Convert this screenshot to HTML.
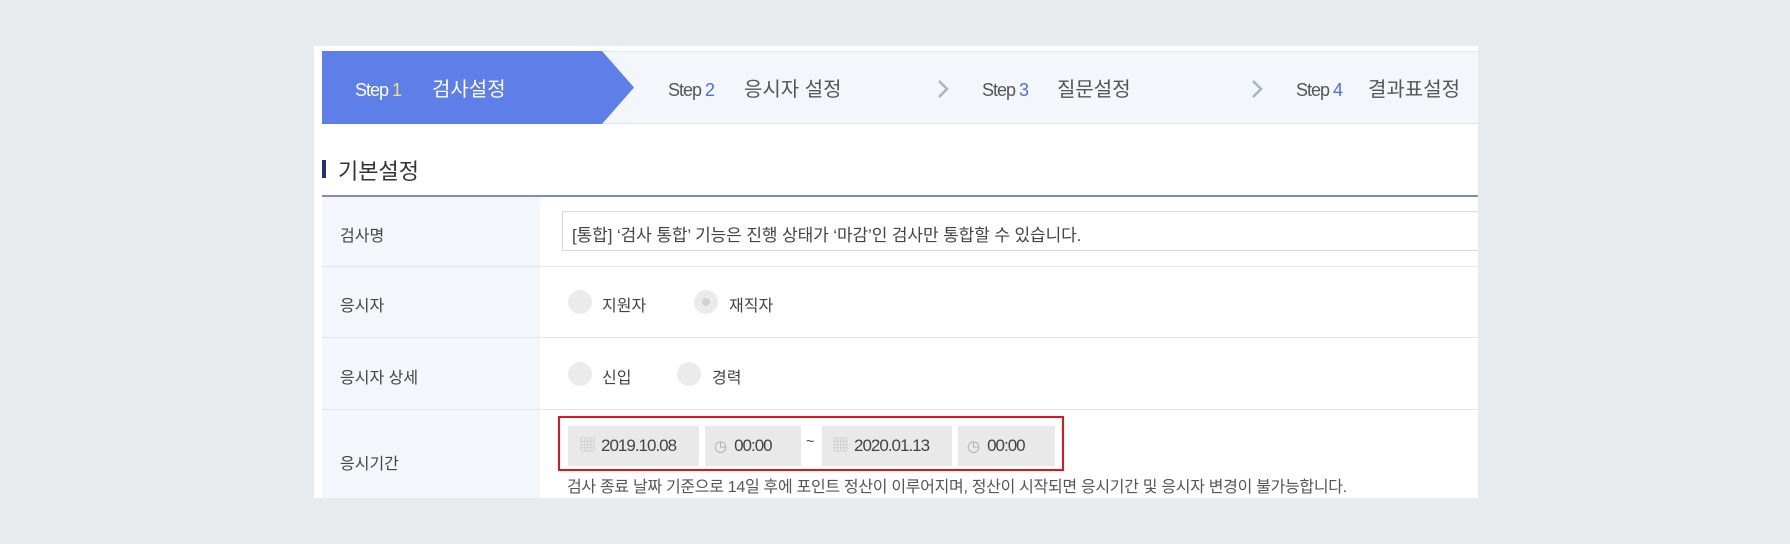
<!DOCTYPE html>
<html><head><meta charset="utf-8"><style>
*{margin:0;padding:0;box-sizing:border-box}
body{width:1790px;height:544px;background:#e8ebee;position:relative;font-family:"Liberation Sans","Noto Sans CJK KR",sans-serif;overflow:hidden}
.a{position:absolute}
.panel{left:314px;top:46px;width:1164px;height:452px;background:#fff;overflow:hidden}
.t{position:absolute;white-space:nowrap;color:#444}
.rad{position:absolute;width:24px;height:24px;border-radius:50%;background:#ebebeb}
.box{position:absolute;top:426px;height:40px;background:#e9e9e9;color:#444;font-size:17px;line-height:40px;letter-spacing:-1px;white-space:nowrap}
.st{position:absolute;top:77px;font-size:18px;line-height:26px;letter-spacing:-1px;white-space:nowrap}
.sk{position:absolute;top:77px;font-size:20px;line-height:26px;white-space:nowrap}
.chev{position:absolute;top:79px}
</style></head><body>
<div class="a panel"></div>
<div class="a" style="left:322px;top:51px;width:1156px;height:73px;background:#f3f6fb;border-top:1px solid #e5e8ee;border-bottom:1px solid #e0e4ea"></div>
<svg class="a" style="left:322px;top:51px" width="320" height="73"><polygon points="0,0 280,0 312,36.5 280,73 0,73" fill="#5e7ee8"/></svg>
<div class="st" style="left:355px;color:#fff">Step <span style="color:#f3e36a">1</span></div>
<div class="sk" style="left:432px;color:#fff">검사설정</div>
<div class="st" style="left:668px;color:#555">Step <span style="color:#4d6fd6">2</span></div>
<div class="sk" style="left:744px;color:#555">응시자 설정</div>
<svg class="chev" style="left:937px" width="12" height="20"><polyline points="2,2 10,10 2,18" fill="none" stroke="#aab4c4" stroke-width="2.5"/></svg>
<div class="st" style="left:982px;color:#555">Step <span style="color:#4d6fd6">3</span></div>
<div class="sk" style="left:1057px;color:#555">질문설정</div>
<svg class="chev" style="left:1251px" width="12" height="20"><polyline points="2,2 10,10 2,18" fill="none" stroke="#aab4c4" stroke-width="2.5"/></svg>
<div class="st" style="left:1296px;color:#555">Step <span style="color:#4d6fd6">4</span></div>
<div class="sk" style="left:1368px;color:#555">결과표설정</div>
<div class="a" style="left:322px;top:160px;width:4px;height:18px;background:#1f3370"></div>
<div class="t" style="left:338px;top:154px;font-size:22px;color:#333">기본설정</div>
<div class="a" style="left:322px;top:195px;width:1156px;height:2px;background:#7d8db5"></div>
<div class="a" style="left:322px;top:197px;width:218px;height:301px;background:#f3f6fb"></div>
<div class="a" style="left:322px;top:266px;width:1156px;height:1px;background:#e2e5ea"></div>
<div class="a" style="left:322px;top:337px;width:1156px;height:1px;background:#e2e5ea"></div>
<div class="a" style="left:322px;top:409px;width:1156px;height:1px;background:#e2e5ea"></div>
<div class="t" style="left:340px;top:222px;font-size:16px">검사명</div>
<div class="t" style="left:340px;top:292px;font-size:16px">응시자</div>
<div class="t" style="left:340px;top:364px;font-size:16px">응시자 상세</div>
<div class="t" style="left:340px;top:450px;font-size:16px">응시기간</div>
<div class="a" style="left:562px;top:211px;width:916px;height:40px;border:1px solid #d6d9de;border-right:none;background:#fff"></div>
<div class="t" style="left:572px;top:221px;font-size:17px;letter-spacing:-0.1px">[통합] ‘검사 통합’ 기능은 진행 상태가 ‘마감’인 검사만 통합할 수 있습니다.</div>
<div class="rad" style="left:568px;top:290px"></div>
<div class="t" style="left:602px;top:292px;font-size:16px">지원자</div>
<div class="rad" style="left:694px;top:290px"></div>
<div class="a" style="left:702px;top:298px;width:8px;height:8px;border-radius:50%;background:#d2d2d2"></div>
<div class="t" style="left:729px;top:292px;font-size:16px">재직자</div>
<div class="rad" style="left:568px;top:362px"></div>
<div class="t" style="left:602px;top:364px;font-size:16px">신입</div>
<div class="rad" style="left:677px;top:362px"></div>
<div class="t" style="left:712px;top:364px;font-size:16px">경력</div>
<div class="a" style="left:558px;top:416px;width:506px;height:55px;border:2px solid #e0141c"></div>
<div class="box" style="left:568px;width:131px"><span style="color:#c8c8c8;margin:0 6px 0 11px">▦</span>2019.10.08</div>
<div class="box" style="left:705px;width:96px"><span style="color:#aaa;margin:0 8px 0 9px;font-size:15px">◷</span>00:00</div>
<div class="t" style="left:806px;top:433px;font-size:14px">~</div>
<div class="box" style="left:822px;width:130px"><span style="color:#c8c8c8;margin:0 6px 0 10px">▦</span>2020.01.13</div>
<div class="box" style="left:958px;width:97px"><span style="color:#aaa;margin:0 8px 0 9px;font-size:15px">◷</span>00:00</div>
<div class="t" style="left:567px;top:473px;font-size:16px;color:#555;letter-spacing:-0.3px">검사 종료 날짜 기준으로 14일 후에 포인트 정산이 이루어지며, 정산이 시작되면 응시기간 및 응시자 변경이 불가능합니다.</div>
</body></html>
